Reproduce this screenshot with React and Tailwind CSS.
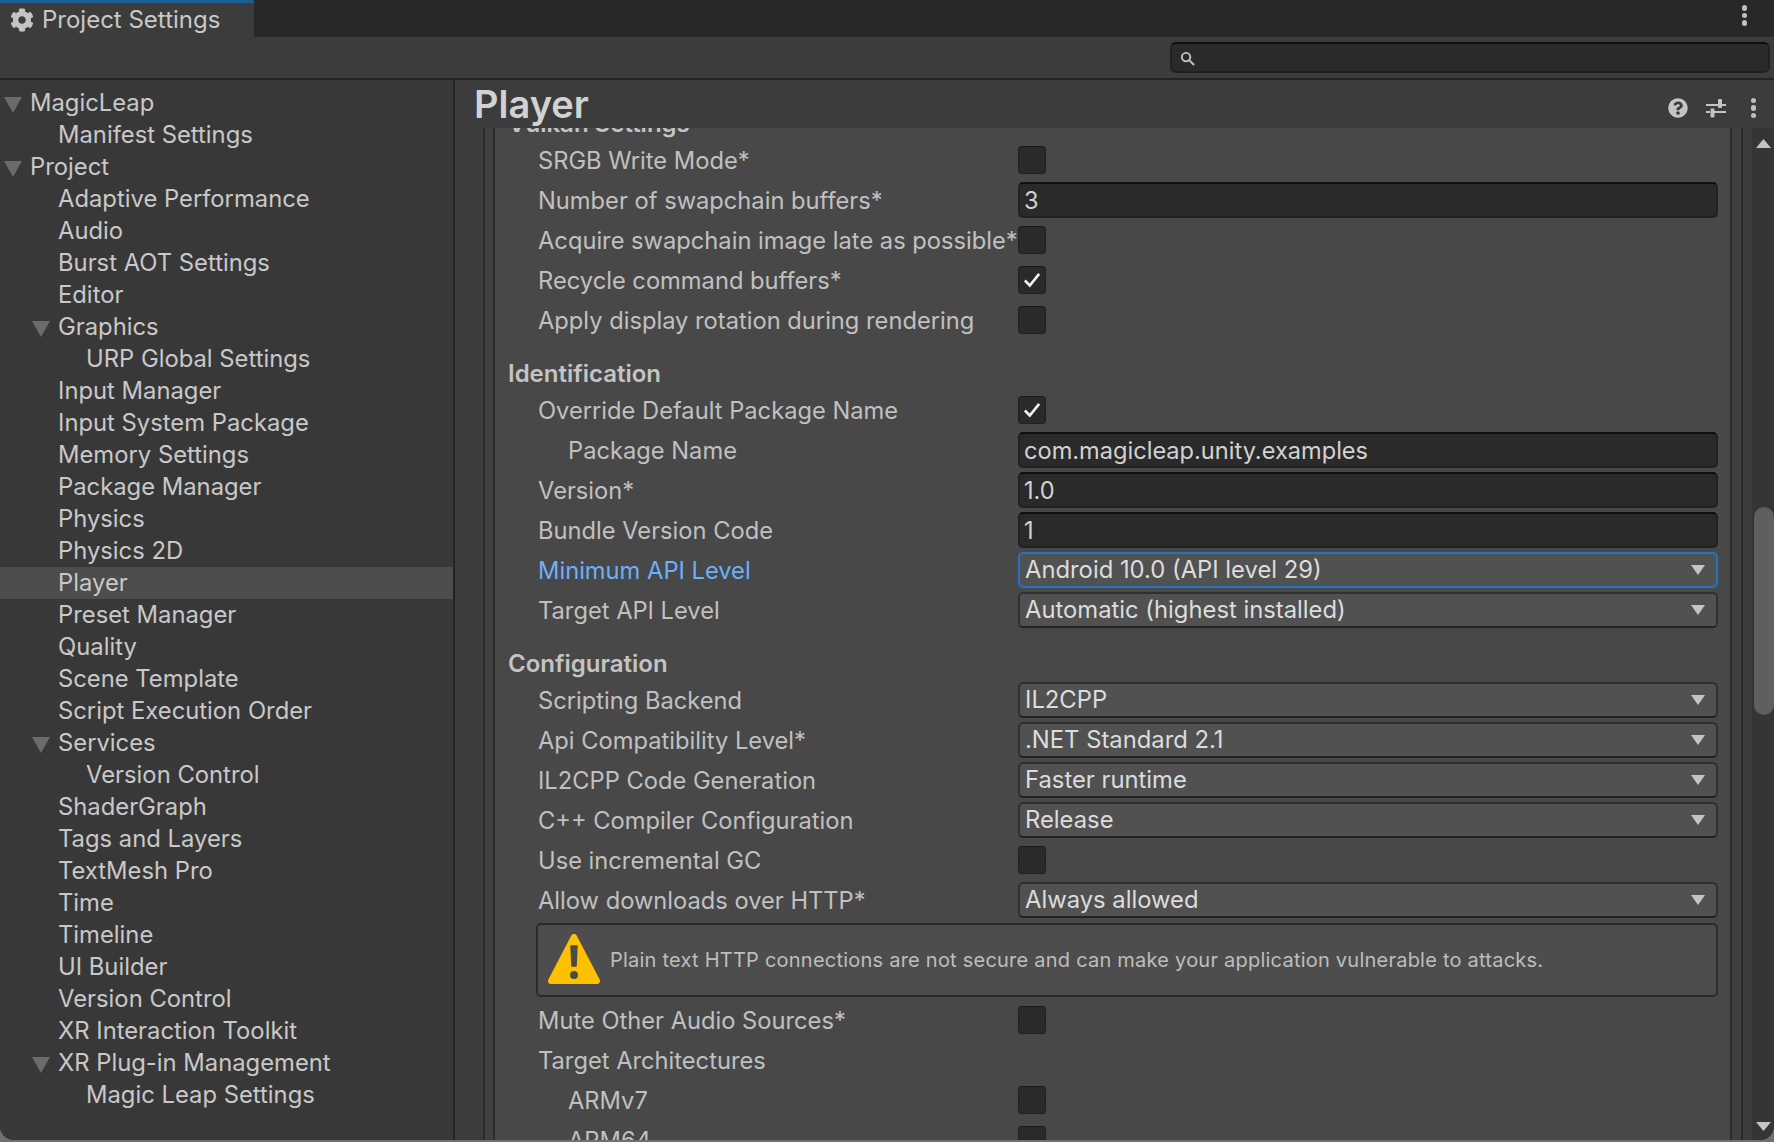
import { FaCog, FaQuestionCircle } from 'react-icons/fa';

const sidebarItems = [
  { name: 'MagicLeap', level: 0, open: true },
  { name: 'Manifest Settings', level: 1 },
  { name: 'Project', level: 0, open: true },
  { name: 'Adaptive Performance', level: 1 },
  { name: 'Audio', level: 1 },
  { name: 'Burst AOT Settings', level: 1 },
  { name: 'Editor', level: 1 },
  { name: 'Graphics', level: 1, open: true },
  { name: 'URP Global Settings', level: 2 },
  { name: 'Input Manager', level: 1 },
  { name: 'Input System Package', level: 1 },
  { name: 'Memory Settings', level: 1 },
  { name: 'Package Manager', level: 1 },
  { name: 'Physics', level: 1 },
  { name: 'Physics 2D', level: 1 },
  { name: 'Player', level: 1, selected: true },
  { name: 'Preset Manager', level: 1 },
  { name: 'Quality', level: 1 },
  { name: 'Scene Template', level: 1 },
  { name: 'Script Execution Order', level: 1 },
  { name: 'Services', level: 1, open: true },
  { name: 'Version Control', level: 2 },
  { name: 'ShaderGraph', level: 1 },
  { name: 'Tags and Layers', level: 1 },
  { name: 'TextMesh Pro', level: 1 },
  { name: 'Time', level: 1 },
  { name: 'Timeline', level: 1 },
  { name: 'UI Builder', level: 1 },
  { name: 'Version Control', level: 1 },
  { name: 'XR Interaction Toolkit', level: 1 },
  { name: 'XR Plug-in Management', level: 1, open: true },
  { name: 'Magic Leap Settings', level: 2 },
];

const rows = [
  { type: 'section', label: 'Vulkan Settings', first: true },
  { type: 'check', label: 'SRGB Write Mode*' },
  { type: 'text', label: 'Number of swapchain buffers*', value: '3' },
  { type: 'check', label: 'Acquire swapchain image late as possible*' },
  { type: 'check', label: 'Recycle command buffers*', checked: true },
  { type: 'check', label: 'Apply display rotation during rendering' },
  { type: 'section', label: 'Identification' },
  { type: 'check', label: 'Override Default Package Name', checked: true },
  { type: 'text', label: 'Package Name', value: 'com.magicleap.unity.examples', indent: true },
  { type: 'text', label: 'Version*', value: '1.0' },
  { type: 'text', label: 'Bundle Version Code', value: '1' },
  { type: 'select', label: 'Minimum API Level', value: 'Android 10.0 (API level 29)', focus: true },
  { type: 'select', label: 'Target API Level', value: 'Automatic (highest installed)' },
  { type: 'section', label: 'Configuration' },
  { type: 'select', label: 'Scripting Backend', value: 'IL2CPP' },
  { type: 'select', label: 'Api Compatibility Level*', value: '.NET Standard 2.1' },
  { type: 'select', label: 'IL2CPP Code Generation', value: 'Faster runtime' },
  { type: 'select', label: 'C++ Compiler Configuration', value: 'Release' },
  { type: 'check', label: 'Use incremental GC' },
  { type: 'select', label: 'Allow downloads over HTTP*', value: 'Always allowed' },
  { type: 'warning' },
  { type: 'check', label: 'Mute Other Audio Sources*' },
  { type: 'label', label: 'Target Architectures' },
  { type: 'check', label: 'ARMv7', indent: true },
  { type: 'check', label: 'ARM64', indent: true },
];

function Triangle({ className }) {
  return (
    <svg viewBox="0 0 18 16" preserveAspectRatio="none" className={className}>
      <path d="M0 0H18L9 16Z" fill="currentColor" />
    </svg>
  );
}

function Dots({ gap }) {
  return (
    <div className={`flex flex-col ${gap}`}>
      <div className="w-[5.5px] h-[5.5px] rounded-full bg-[#c0c0c0]" />
      <div className="w-[5.5px] h-[5.5px] rounded-full bg-[#c0c0c0]" />
      <div className="w-[5.5px] h-[5.5px] rounded-full bg-[#c0c0c0]" />
    </div>
  );
}

function SidebarRow({ item }) {
  const indent = item.level === 0 ? 'pl-[30px]' : item.level === 1 ? 'pl-[58px]' : 'pl-[86px]';
  const arrowPos = item.level === 0 ? 'left-[4px]' : 'left-[32px]';
  return (
    <div className={`relative h-[32px] flex items-center ${indent} ${item.selected ? 'bg-[#4d4d4d]' : ''}`}>
      {item.open && <Triangle className={`absolute ${arrowPos} top-[10px] w-[18px] h-[16px] text-[#6b6b6b]`} />}
      <span className="text-[23.8px] leading-none text-[#c8c8c8] whitespace-nowrap">{item.name}</span>
    </div>
  );
}

function Field({ row }) {
  if (row.type === 'check') {
    return (
      <div className="w-[28px] h-[28px] rounded-[4px] bg-[#2a2a2a] border border-[#212121] border-t-[#1a1a1a] flex items-center justify-center">
        {row.checked && (
          <svg viewBox="0 0 20 20" className="w-[22px] h-[22px]">
            <path d="M3.5 10.5L8 15L16.5 4.5" fill="none" stroke="#f0f0f0" strokeWidth="2.4" />
          </svg>
        )}
      </div>
    );
  }
  if (row.type === 'text') {
    return (
      <div className="w-full h-[36px] rounded-[5px] bg-[#2a2a2a] border-2 border-[#212121] border-t-[#0f0f0f] flex items-center pl-[4px] pt-[2px] text-[23.6px] leading-none text-[#d2d2d2]">
        {row.value}
      </div>
    );
  }
  if (row.type === 'select') {
    return (
      <div className={`w-full h-[36px] rounded-[5px] bg-[#515151] border-2 flex items-center justify-between pl-[5px] pr-[11px] text-[23.8px] leading-none text-[#dcdcdc] ${row.focus ? 'border-[#1f74c4]' : 'border-[#303030] border-b-[#232323]'}`}>
        <span>{row.value}</span>
        <Triangle className="w-[14px] h-[10px] text-[#c4c4c4]" />
      </div>
    );
  }
  return null;
}

function WarningBox() {
  return (
    <div className="mt-[3px] mb-[3px] ml-[41px] mr-[12px] h-[74px] rounded-[5px] bg-[#4d4d4d] border-2 border-[#2b2b2b] flex items-center pl-[10px]">
      <svg viewBox="0 0 52 52" className="w-[52px] h-[52px] shrink-0">
        <path d="M26 3L49 47H3Z" fill="#ffc000" stroke="#ffc000" strokeWidth="6" strokeLinejoin="round" />
        <path d="M23 12H29L28 32H24Z" fill="#4a4a4a" stroke="#4a4a4a" strokeWidth="1.5" strokeLinejoin="round" />
        <circle cx="26" cy="41" r="4" fill="#4a4a4a" />
      </svg>
      <span className="ml-[10px] text-[20px] leading-none tracking-[0.23px] text-[#bdbdbd] whitespace-nowrap">
        Plain text HTTP connections are not secure and can make your application vulnerable to attacks.
      </span>
    </div>
  );
}

function InspectorRow({ row }) {
  if (row.type === 'warning') return <WarningBox />;
  if (row.type === 'section') {
    return (
      <div className={`h-[50px] pt-[18px] flex items-center pl-[13px] text-[24px] leading-none font-semibold text-[#c4c4c4] ${row.first ? '-mt-[38px]' : ''}`}>
        {row.label}
      </div>
    );
  }
  return (
    <div className="h-[40px] flex items-center pr-[12px]">
      <div
        className={`w-[523px] shrink-0 pt-[2px] text-[23.7px] leading-none whitespace-nowrap ${row.indent ? 'pl-[73px]' : 'pl-[43px]'} ${row.focus ? 'text-[#6cb0f8]' : 'text-[#c0c0c0]'}`}
      >
        {row.label}
      </div>
      <div className="flex-1 flex items-center">
        <Field row={row} />
      </div>
    </div>
  );
}

export default function App() {
  return (
    <div className="w-full h-[1142px] bg-[#707070] overflow-hidden font-['Inter',sans-serif]">
      <div className="h-[1140px] rounded-b-[14px] overflow-hidden bg-[#3c3c3c] flex flex-col">
        {/* Tab bar */}
        <div className="h-[37px] shrink-0 bg-[#282828] flex justify-between">
          <div className="w-[254px] bg-[#3c3c3c] border-t-[3px] border-[#1a5f93] flex items-center gap-[8px] pl-[10px]">
            <FaCog className="w-[24px] h-[24px] text-[#c4c4c4]" />
            <span className="text-[24px] leading-none text-[#c8c8c8]">Project Settings</span>
          </div>
          <div className="pr-[27px] pt-[5px]">
            <Dots gap="gap-[2px]" />
          </div>
        </div>

        {/* Search toolbar */}
        <div className="h-[43px] shrink-0 bg-[#3c3c3c] border-b-2 border-[#232323] flex justify-end items-start pt-[5px] pr-[4px]">
          <div className="w-[600px] h-[31px] rounded-[6px] bg-[#2a2a2a] border-2 border-[#212121] border-t-[#0f0f0f] flex items-center pl-[8px] pt-[2px]">
            <svg viewBox="0 0 16 16" className="w-[15px] h-[15px]">
              <circle cx="6.5" cy="6.5" r="4.5" fill="none" stroke="#c4c4c4" strokeWidth="2" />
              <path d="M10 10L15 15" stroke="#c4c4c4" strokeWidth="2.2" />
            </svg>
          </div>
        </div>

        <div className="flex-1 flex min-h-0">
          {/* Sidebar */}
          <div className="w-[455px] shrink-0 bg-[#383838] border-r-2 border-[#232323] pt-[7px] overflow-hidden">
            {sidebarItems.map((item, i) => (
              <SidebarRow key={i} item={item} />
            ))}
          </div>

          {/* Main panel */}
          <div className="flex-1 min-w-0 flex flex-col">
            <div className="h-[48px] shrink-0 bg-[#3c3c3c] flex items-center justify-between pl-[19px] pr-[18px]">
              <span className="text-[38px] leading-none font-semibold text-[#d2d2d2]">Player</span>
              <div className="flex items-center mt-[8px]">
                <FaQuestionCircle className="w-[20px] h-[20px] text-[#c4c4c4]" />
                <svg viewBox="0 0 20 20" className="w-[20px] h-[20px] ml-[18px]">
                  <path d="M0 7H12M16 7H20M0 14H4M8 14H20" stroke="#c4c4c4" strokeWidth="2" />
                  <rect x="12" y="1" width="4" height="9" rx="1" fill="#c4c4c4" />
                  <rect x="4.5" y="10.5" width="4" height="9" rx="1" fill="#c4c4c4" />
                </svg>
                <div className="ml-[25px]">
                  <Dots gap="gap-[1.8px]" />
                </div>
              </div>
            </div>

            <div className="flex-1 min-h-0 flex">
              <div className="w-[30px] shrink-0 bg-[#3c3c3c] border-r-2 border-[#2b2b2b]" />
              <div className="w-[10px] shrink-0 bg-[#404040] border-r-2 border-[#2b2b2b]" />
              <div className="flex-1 min-w-0 bg-[#484848] overflow-hidden">
                {rows.map((row, i) => (
                  <InspectorRow key={i} row={row} />
                ))}
              </div>
              <div className="w-[13px] shrink-0 bg-[#404040] border-x-2 border-[#2b2b2b]" />
              <div className="w-[9px] shrink-0 bg-[#3c3c3c]" />

              {/* Scrollbar */}
              <div className="relative w-[22px] shrink-0 bg-[#353535]">
                <Triangle className="absolute right-[3px] top-[11px] w-[15px] h-[9px] rotate-180 text-[#c4c4c4]" />
                <div className="absolute right-0 top-[379px] w-[20px] h-[208px] rounded-full bg-[#5f5f5f]" />
                <Triangle className="absolute right-[3px] bottom-[9px] w-[15px] h-[9px] text-[#c4c4c4]" />
              </div>
            </div>
          </div>
        </div>
      </div>
    </div>
  );
}
